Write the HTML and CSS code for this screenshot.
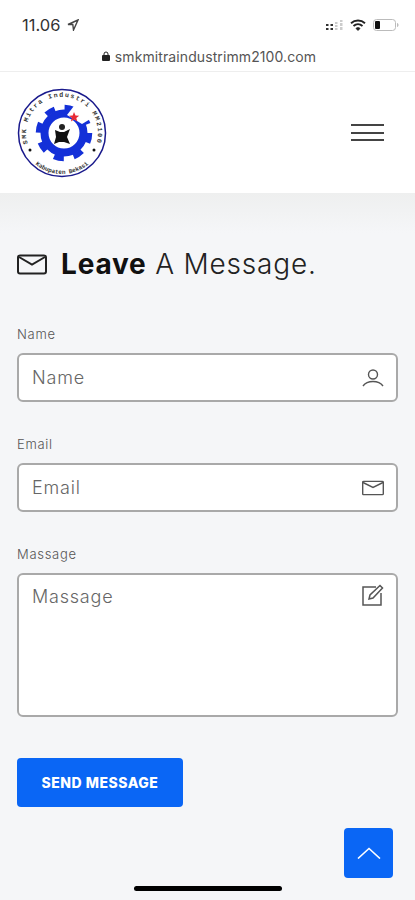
FILE: index.html
```html
<!DOCTYPE html>
<html lang="id">
<head>
  <meta charset="UTF-8" />
  <meta name="viewport" content="width=device-width, initial-scale=1.0" />
  <title>Leave A Message</title>
  <link rel="stylesheet" href="styles.css">
</head>
<body>
  <div class="status-bar">
    <div class="time">11.06
      <svg class="arrow" width="12" height="12" viewBox="0 0 12 12"><path d="M11 1 1 5.500h4.800L6.500 11z" fill="none" stroke="#444" stroke-width="1.400"/></svg>
    </div>
    <div class="status-icons">
      <svg width="17" height="12" viewBox="0 0 17 12">
        <g fill="#333"><rect x="0" y="5" width="2.500" height="2"/><rect x="0" y="9" width="2.500" height="2"/><rect x="4.500" y="5" width="2.500" height="2"/><rect x="4.500" y="9" width="2.500" height="2"/></g>
        <g fill="#ccc"><rect x="9" y="3" width="2.500" height="2"/><rect x="9" y="6" width="2.500" height="2"/><rect x="9" y="9" width="2.500" height="2"/><rect x="14" y="1" width="2.500" height="2"/><rect x="14" y="4" width="2.500" height="3"/><rect x="14" y="8" width="2.500" height="3"/></g>
      </svg>
      <svg width="16" height="12" viewBox="0 0 16 12" fill="none" stroke="#222" stroke-width="1.900"><path d="M1 4.200c4-3.600 10-3.600 14 0M3.500 6.900c2.600-2.200 6.400-2.200 9 0"/><path d="M6 9.400c1.200-.9 2.800-.9 4 0L8 11.400z" fill="#222" stroke-width="1"/></svg>
      <svg width="26" height="12" viewBox="0 0 26 12"><rect x=".5" y=".5" width="22" height="11" rx="3" fill="none" stroke="#bbb"/><rect x="2" y="2" width="5" height="8" rx="1" fill="#111"/><path d="M24 4v4c1-.3 1.500-1 1.500-2S25 4.300 24 4z" fill="#bbb"/></svg>
    </div>
  </div>
  <div class="url-bar">
    <svg width="8" height="10" viewBox="0 0 8 10"><path d="M2 4V3a2 2 0 0 1 4 0v1" fill="none" stroke="#222"/><rect y="4" width="8" height="6" rx="1" fill="#222"/></svg>
    <span>smkmitraindustrimm2100.com</span>
  </div>

  <header class="site-header">
    <svg class="logo" width="90" height="90" viewBox="0 0 90 90">
      <circle cx="45" cy="45" r="43.500" fill="#fff" stroke="#1a1a8c" stroke-width="1.500"/>
      <defs>
        <path id="topArc" d="M10.500 55A36 36 0 1 1 79.500 55"/>
        <path id="bottomArc" d="M12.500 70A41 41 0 0 0 77.500 70"/>
      </defs>
      <text class="logo-text logo-top"><textPath href="#topArc" startOffset="50%" text-anchor="middle">SMK Mitra Industri MM2100</textPath></text>
      <text class="logo-text"><textPath href="#bottomArc" startOffset="50%" text-anchor="middle">Kabupaten Bekasi</textPath></text>
      <g transform="translate(2 0)">
        <circle cx="45" cy="45" r="19.500" fill="none" stroke="#1430d8" stroke-width="8"/>
        <circle cx="45" cy="45" r="25.500" fill="none" stroke="#1430d8" stroke-width="5.500" stroke-dasharray="10 10"/>
        <path d="M48 27 58 14 73 30 63 36z" fill="#fff"/>
        <path d="M55 24l1.500 3.500 3.700.2-2.900 2.300 1 3.600-3.300-2-3.100 2 1-3.600-2.900-2.300 3.700-.2z" fill="#e82a35"/>
        <circle cx="43" cy="39" r="3" fill="#222"/>
        <path d="M36 42l5 2h4l6-3-3 8 3 7-6-2h-5l-5 2 2-7z" fill="#111"/>
      </g>
      <circle cx="13" cy="62" r="1.500" fill="#111"/><circle cx="77" cy="62" r="1.500" fill="#111"/>
    </svg>
    <button class="menu-btn" aria-label="Menu"><span></span><span></span><span></span></button>
  </header>

  <main class="content">
    <h2 class="title">
      <svg class="title-icon" width="30" height="21" viewBox="0 0 30 21" fill="none" stroke="#222" stroke-width="2"><rect x="1" y="1.500" width="28" height="18" rx="2"/><path d="M2 3l13 7.500L28 3"/></svg>
      <span><strong>Leave</strong> A Message.</span>
    </h2>

    <form class="contact-form">
      <div class="field">
        <label for="name">Name</label>
        <div class="control">
          <input type="text" id="name" placeholder="Name" />
          <svg class="field-icon" width="22" height="18" viewBox="0 0 22 18" fill="none" stroke="#555" stroke-width="1.400"><circle cx="11" cy="5.500" r="4.500"/><path d="M1 17c2.500-3.500 6-4.500 10-4.500s7.500 1 10 4.500"/></svg>
        </div>
      </div>
      <div class="field">
        <label for="email">Email</label>
        <div class="control">
          <input type="email" id="email" placeholder="Email" />
          <svg class="field-icon" width="22" height="15" viewBox="0 0 22 15" fill="none" stroke="#555" stroke-width="1.400"><rect x=".7" y=".7" width="20.600" height="13.600" rx="1"/><path d="M1 2l10 5 10-5"/></svg>
        </div>
      </div>
      <div class="field">
        <label for="massage">Massage</label>
        <div class="control">
          <textarea id="massage" placeholder="Massage"></textarea>
          <svg class="field-icon area-icon" width="22" height="22" viewBox="0 0 22 22" fill="none" stroke="#555" stroke-width="1.500"><path d="M14 3H1v18h18V9"/><path d="M8 11l-1 4 4-1L20.500 4 18 1.500z"/></svg>
        </div>
      </div>
      <button type="submit" class="send-btn">SEND MESSAGE</button>
    </form>
  </main>

  <a class="to-top" href="#" aria-label="Top">
    <svg width="24" height="12" viewBox="0 0 24 12" fill="none" stroke="#fff" stroke-width="1.600"><path d="M1 11.500 12 1.500l11 10"/></svg>
  </a>
  <div class="home-bar"></div>
</body>
</html>
```

FILE: styles.css
```css
html, body {
  margin: 0;
  padding: 0;
}
body {
  position: relative;
  width: 415px;
  height: 900px;
  overflow: hidden;
  font-family: Inter, "Liberation Sans", sans-serif;
  background: #f5f6f8;
  color: #222;
}
.status-bar {
  height: 44px;
  box-sizing: border-box;
  padding: 15px 16px 0 22px;
  display: flex;
  justify-content: space-between;
  align-items: flex-start;
  background: #fff;
}
.time {
  font-size: 16.500px;
  line-height: 22px;
  margin-top: -1px;
  color: #333;
}
.arrow {
  margin-left: 2px;
}
.status-icons {
  display: flex;
  gap: 7px;
  align-items: center;
  margin-top: 4px;
}
.url-bar {
  height: 28px;
  box-sizing: border-box;
  display: flex;
  justify-content: center;
  align-items: center;
  gap: 5px;
  padding: 0 0 3px 3px;
  background: #fff;
  border-bottom: 1px solid #eee;
  font-size: 14px;
  letter-spacing: .1px;
  color: #555;
}
.site-header {
  height: 121px;
  box-sizing: border-box;
  padding: 0 31px 0 17px;
  display: flex;
  justify-content: space-between;
  align-items: center;
  background: #fff;
}
.logo-text {
  font-family: "Liberation Mono", monospace;
  font-size: 6px;
  font-weight: bold;
  fill: #333;
}
.logo-top {
  font-size: 6.500px;
  letter-spacing: 1.500px;
}
.menu-btn {
  display: flex;
  flex-direction: column;
  gap: 5.500px;
  width: 33px;
  padding: 0;
  border: none;
  background: none;
}
.menu-btn span {
  height: 2px;
  background: #444;
}
.content {
  height: 707px;
  box-sizing: border-box;
  padding: 53px 17px 0 17px;
  background: linear-gradient(#eeefef, #f5f6f8 40px);
}
.title {
  margin: 0;
  display: flex;
  align-items: center;
  gap: 14px;
  font-size: 28px;
  line-height: 36px;
  font-weight: 300;
  letter-spacing: .8px;
  color: #222;
}
.title strong {
  font-weight: 700;
  color: #111;
}
.contact-form {
  margin-top: 44px;
}
.field {
  margin-bottom: 34px;
}
.field:last-of-type {
  margin-bottom: 0;
}
.field label {
  display: block;
  font-size: 13px;
  line-height: 16px;
  font-weight: 300;
  letter-spacing: .7px;
  margin-bottom: 11px;
  color: #555;
}
.control {
  position: relative;
}
.control input, .control textarea {
  display: block;
  width: 100%;
  box-sizing: border-box;
  border: 2px solid #a9a9a9;
  border-radius: 6px;
  background: #fff;
  padding: 0 13px;
  font-family: inherit;
  font-size: 18px;
  font-weight: 300;
  letter-spacing: .8px;
  color: #333;
  outline: none;
}
.control input {
  height: 49px;
}
.control textarea {
  height: 144px;
  padding-top: 11px;
  resize: none;
}
.control input::placeholder, .control textarea::placeholder {
  color: #666;
  opacity: 1;
}
.field-icon {
  position: absolute;
  right: 14px;
  top: 50%;
  transform: translateY(-50%);
}
.area-icon {
  top: 11px;
  transform: none;
}
.send-btn {
  display: block;
  width: 166px;
  height: 49px;
  margin-top: 41px;
  border: none;
  border-radius: 4px;
  background: #0a66f5;
  color: #fff;
  font-family: inherit;
  font-size: 14px;
  font-weight: 800;
  letter-spacing: .5px;
}
.to-top {
  position: absolute;
  left: 344px;
  top: 828px;
  width: 49px;
  height: 50px;
  display: flex;
  justify-content: center;
  align-items: center;
  border-radius: 4px;
  background: #0a66f5;
}
.home-bar {
  position: absolute;
  left: 134px;
  top: 886px;
  width: 148px;
  height: 5px;
  border-radius: 3px;
  background: #000;
}
```
